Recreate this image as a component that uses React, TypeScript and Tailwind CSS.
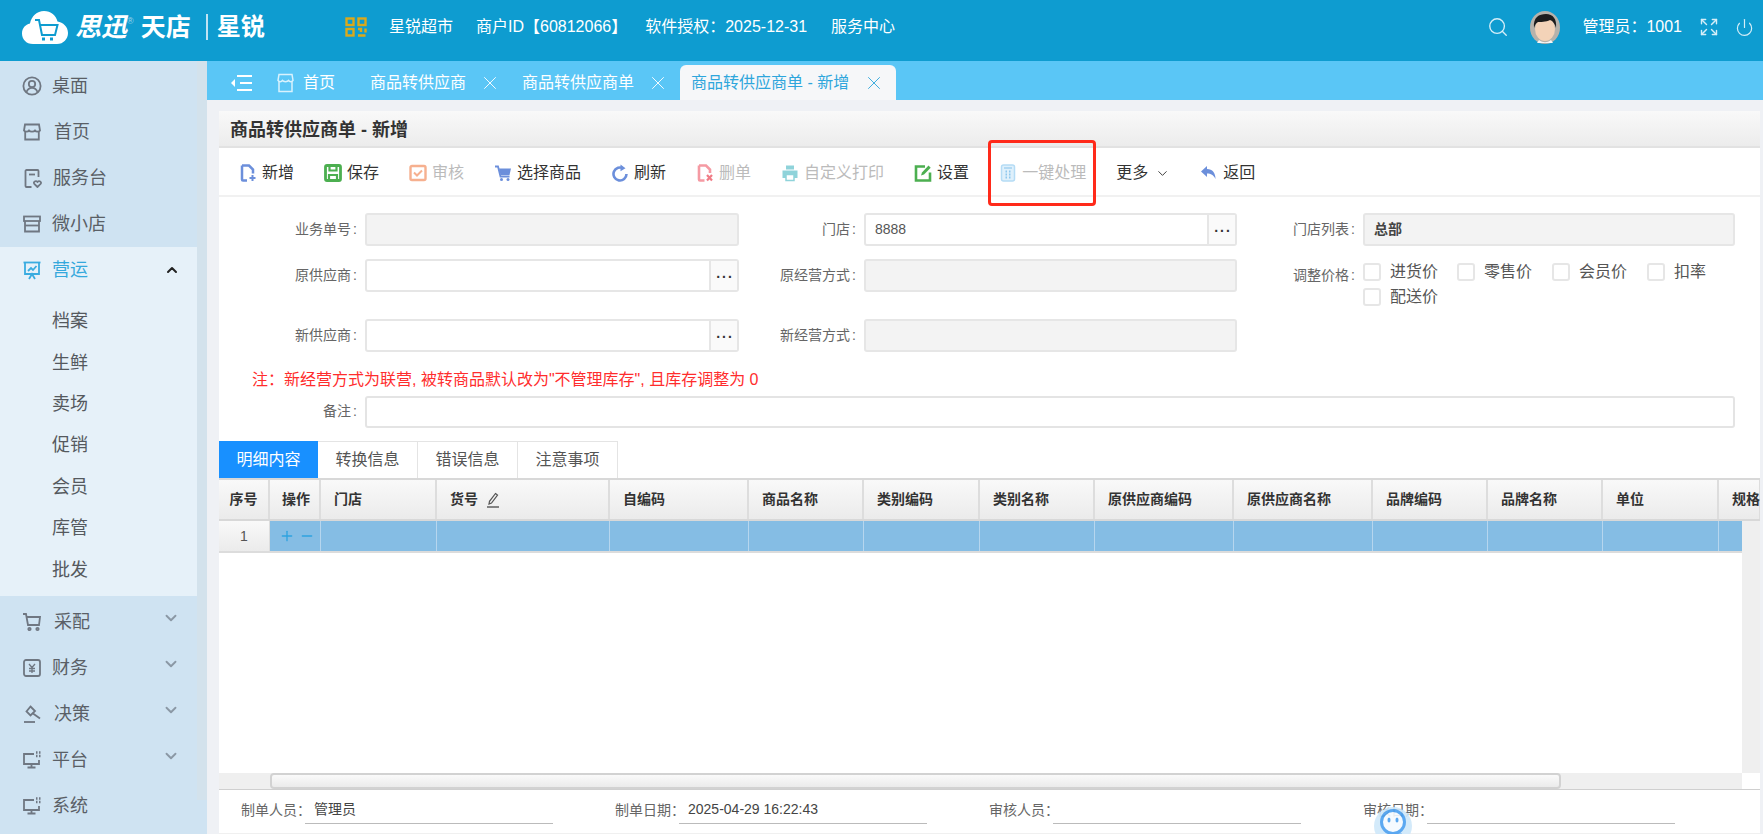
import { ChevronDown, ChevronUp, Search, Expand, Power, X, Plus, Minus } from "lucide-react";
import type { ReactNode } from "react";

const gridCols =
  "grid grid-cols-[51px_51px_116px_173px_139px_115px_116px_115px_139px_139px_115px_115px_116px_42px]";

const tableColumns = [
  "序号", "操作", "门店", "货号", "自编码", "商品名称", "类别编码", "类别名称",
  "原供应商编码", "原供应商名称", "品牌编码", "品牌名称", "单位", "规格",
];

function SideIcon({ children, color = "#6f7782" }: { children: ReactNode; color?: string }) {
  return (
    <svg viewBox="0 0 20 20" className="h-[20px] w-[20px] shrink-0" fill="none" stroke={color} strokeWidth="1.8">
      {children}
    </svg>
  );
}

const sideIcons: Record<string, ReactNode> = {
  桌面: (
    <SideIcon>
      <circle cx="10" cy="10" r="8.6" />
      <circle cx="10" cy="8" r="3.2" />
      <path d="M4.5 16c1-3 3-4.2 5.5-4.2s4.500 1.200 5.500 4.200" />
    </SideIcon>
  ),
  首页: (
    <SideIcon>
      <path d="M3 2.500h14l1 6c-1.500 1.500-4 1.500-5 0-1 1.500-5 1.500-6 0-1 1.500-3.500 1.500-5 0z" />
      <path d="M3.200 9v8.500h13.600V9" />
    </SideIcon>
  ),
  服务台: (
    <SideIcon>
      <path d="M16.500 9V3a1 1 0 0 0-1-1h-11a1 1 0 0 0-1 1v15a1 1 0 0 0 1 1h5" />
      <path d="M7 6.500h6" />
      <path d="M15.500 19l-3.200-3.200c-1.500-2 1.500-3.600 3.200-1.800 1.700-1.800 4.500-.2 3.200 1.800z" />
    </SideIcon>
  ),
  微小店: (
    <SideIcon>
      <rect x="2" y="2.500" width="16" height="4.500" />
      <path d="M3 7v10.500h14V7" />
      <path d="M3 11.500h14" />
    </SideIcon>
  ),
  营运: (
    <SideIcon color="#39ace0">
      <path d="M1.500 2.500h17" />
      <path d="M3 2.500v11.500h14V2.500" />
      <path d="M6 11l3-3 2 2 3.500-4" />
      <path d="M7 19l3-5 3 5" />
    </SideIcon>
  ),
  采配: (
    <SideIcon>
      <path d="M1 2h3l2 11h11l1-8H5" />
      <circle cx="7.500" cy="17" r="1.200" />
      <circle cx="15.500" cy="17" r="1.200" />
    </SideIcon>
  ),
  财务: (
    <SideIcon>
      <rect x="2" y="2" width="16" height="16" rx="2" />
      <path d="M7 6l3 3.500L13 6M7 10.500h6M7 13h6M10 9.500V15" strokeWidth="1.300" />
    </SideIcon>
  ),
  决策: (
    <SideIcon>
      <path d="M8.500 2.500L13 7l-4.500 4.500L4.500 7.500z" />
      <path d="M11 9.500l7 5" />
      <path d="M2 18h11" />
    </SideIcon>
  ),
  平台: (
    <SideIcon>
      <path d="M12 4H2v10h15v-4" />
      <path d="M9.500 14v3M5.500 17.500h8" />
      <path d="M14 2.500h1.500M17 2.500h1.500M14 6h1.500M17 6h1.500" strokeWidth="2.400" />
    </SideIcon>
  ),
  系统: (
    <SideIcon>
      <path d="M12 4H2v10h15v-4" />
      <path d="M9.500 14v3M5.500 17.500h8" />
      <path d="M14 2.500h1.500M17 2.500h1.500M14 6h1.500M17 6h1.500" strokeWidth="2.400" />
    </SideIcon>
  ),
};

const sideTextGap: Record<string, string> = {
  首页: "ml-[12px]",
  服务台: "ml-[11px]",
  采配: "ml-[12px]",
  决策: "ml-[12px]",
};

function SideItem({ name, arrow, active }: { name: string; arrow?: "up" | "down"; active?: boolean }) {
  return (
    <div className="flex h-[46px] items-center pl-[22px] text-[18px]">
      {sideIcons[name]}
      <span className={`${sideTextGap[name] ?? "ml-[10px]"} ${active ? "text-[#35a8dc]" : "text-[#5a5f66]"}`}>{name}</span>
      {arrow === "up" && <ChevronUp className="ml-auto mr-[17px] h-[16px] w-[16px] text-[#222]" strokeWidth={3} />}
      {arrow === "down" && <ChevronDown className="ml-auto mr-[17px] mb-[8px] h-[18px] w-[18px] text-[#8b98a5]" strokeWidth={2.500} />}
    </div>
  );
}

function Sidebar() {
  return (
    <div className="flex w-[207px] shrink-0 bg-[#cfe3f2]">
      <div className="w-[197px] pt-[2px]">
        <SideItem name="桌面" />
        <SideItem name="首页" />
        <SideItem name="服务台" />
        <SideItem name="微小店" />
        <div className="h-[349px] bg-[#e6f1f9]">
          <SideItem name="营运" arrow="up" active />
          <div className="pt-[8px] pl-[52px] text-[18px] text-[#55595e]">
            {["档案", "生鲜", "卖场", "促销", "会员", "库管", "批发"].map((s) => (
              <div key={s} className="flex h-[41.400px] items-center">{s}</div>
            ))}
          </div>
        </div>
        <div className="pt-[3px]">
          <SideItem name="采配" arrow="down" />
          <SideItem name="财务" arrow="down" />
          <SideItem name="决策" arrow="down" />
          <SideItem name="平台" arrow="down" />
          <SideItem name="系统" />
        </div>
      </div>
      <div className="h-[739px] w-[10px] bg-[#d3e2ec]" />
    </div>
  );
}

function ToolIcon({ children }: { children: ReactNode }) {
  return <svg viewBox="0 0 18 18" className="h-[18px] w-[18px] shrink-0">{children}</svg>;
}

const toolIcons: Record<string, ReactNode> = {
  新增: (
    <ToolIcon>
      <path d="M3 1.500h7l4 4v4M8 16.500H4a1 1 0 0 1-1-1v-14" fill="none" stroke="#6c8fdb" strokeWidth="2.500" />
      <path d="M13.500 11v6M10.500 14h6" stroke="#6c8fdb" strokeWidth="2" />
    </ToolIcon>
  ),
  保存: (
    <ToolIcon>
      <rect x="1.500" y="1.500" width="15" height="15" rx="1.500" fill="none" stroke="#4caf50" strokeWidth="2.800" />
      <path d="M5.500 2v4.500h7V2M5 11h8v5H5z" fill="none" stroke="#4caf50" strokeWidth="2.200" />
    </ToolIcon>
  ),
  审核: (
    <ToolIcon>
      <rect x="1.500" y="2" width="15" height="14" rx="1.500" fill="none" stroke="#f6b08f" strokeWidth="2.400" />
      <path d="M5 8.500l3 3 5-5" fill="none" stroke="#f6b08f" strokeWidth="2" />
    </ToolIcon>
  ),
  选择商品: (
    <ToolIcon>
      <path d="M1 2.500h3l2.500 10h9" fill="none" stroke="#6c8fdb" strokeWidth="1.800" />
      <path d="M5 4.500h12l-1.500 6.500H6.500z" fill="#6c8fdb" />
      <circle cx="7.500" cy="15.500" r="1.500" fill="#6c8fdb" />
      <circle cx="14" cy="15.500" r="1.500" fill="#6c8fdb" />
    </ToolIcon>
  ),
  刷新: (
    <ToolIcon>
      <path d="M12.500 4.500A6.500 6.500 0 1 0 15.500 10" fill="none" stroke="#6c8fdb" strokeWidth="2.600" />
      <path d="M9.500 0.500l5 3.800-5 3z" fill="#6c8fdb" />
    </ToolIcon>
  ),
  删单: (
    <ToolIcon>
      <path d="M3 1.500h7l4 4v3.500M8.500 16.500H4a1 1 0 0 1-1-1v-14" fill="none" stroke="#f59aa3" strokeWidth="2.600" />
      <path d="M11 11l5 5.500M16 11l-5 5.500" stroke="#f07c86" strokeWidth="2.200" />
    </ToolIcon>
  ),
  自定义打印: (
    <ToolIcon>
      <path d="M5 1.500h8v4H5z" fill="#8fd3da" />
      <path d="M1.500 6.500h15v7.500H1.500z" fill="#8fd3da" />
      <path d="M5 10.500h8v6H5z" fill="#fff" stroke="#8fd3da" strokeWidth="1.500" />
    </ToolIcon>
  ),
  设置: (
    <ToolIcon>
      <path d="M11 2.500H2v14h14v-8" fill="none" stroke="#4caf50" strokeWidth="2.600" />
      <path d="M7 11.500l1-3L14.500 1.500l2.200 2.200L10 10.500z" fill="#4caf50" />
    </ToolIcon>
  ),
  一键处理: (
    <ToolIcon>
      <rect x="2.500" y="1" width="13" height="16" rx="2" fill="#dff0fb" stroke="#b5dcf5" strokeWidth="1.500" />
      <path d="M5 4h8" stroke="#a3d2f1" strokeWidth="1.500" />
      <path d="M6.500 7.500h1.500M10 7.500h1.500M6.500 10.500h1.500M10 10.500h1.500M6.500 13.500h1.500M10 13.500h1.500" stroke="#8fc7ee" strokeWidth="2" />
    </ToolIcon>
  ),
  返回: (
    <ToolIcon>
      <path d="M7 2L1 7.500 7 13V9.500c4 0 6.500 1.500 8.500 5.500 0-6-3-10-8.500-10z" fill="#6c8fdb" />
    </ToolIcon>
  ),
};

function ToolButton({ label, disabled, children }: { label: string; disabled?: boolean; children?: ReactNode }) {
  return (
    <div className={`relative flex h-[24px] items-center gap-[5px] text-[16px] ${disabled ? "text-[#bbbbbb]" : "text-[#333333]"}`}>
      {toolIcons[label]}
      <span className="whitespace-nowrap">{label}</span>
      {children}
    </div>
  );
}

function Toolbar() {
  return (
    <div className="flex h-[49px] shrink-0 items-center gap-[30px] border-b-2 border-[#f1f1f1] pt-[3px] pl-[20px]">
      <ToolButton label="新增" />
      <ToolButton label="保存" />
      <ToolButton label="审核" disabled />
      <ToolButton label="选择商品" />
      <ToolButton label="刷新" />
      <ToolButton label="删单" disabled />
      <ToolButton label="自定义打印" disabled />
      <ToolButton label="设置" />
      <ToolButton label="一键处理" disabled>
        <div className="absolute top-[-21px] right-[-10px] bottom-[-21px] left-[-11px] z-10 rounded-[4px] border-[3px] border-[#ff2a1a]" />
      </ToolButton>
      <div className="flex h-[24px] items-center gap-[7px] text-[16px] text-[#333333]">
        <span>更多</span>
        <ChevronDown className="h-[15px] w-[15px] text-[#333]" strokeWidth={1.500} />
      </div>
      <ToolButton label="返回" />
    </div>
  );
}

function Label({ text, className = "" }: { text: string; className?: string }) {
  return (
    <div className={`flex h-[33px] items-center justify-end pr-[8px] text-[14px] text-[#666666] ${className}`}>
      {text}<span className="ml-[2px]">:</span>
    </div>
  );
}

function Field({ value, disabled, picker, boldValue }: { value?: string; disabled?: boolean; picker?: boolean; boldValue?: boolean }) {
  return (
    <div className={`flex h-[33px] overflow-hidden rounded-[3px] border-2 border-[#e6e6e6] ${disabled ? "bg-[#f3f3f3]" : "bg-white"}`}>
      <div className={`flex-1 pl-[9px] text-[14px] leading-[29px] ${boldValue ? "font-semibold text-[#444]" : "text-[#555]"}`}>{value}</div>
      {picker && (
        <div className="flex w-[28px] items-center justify-center border-l-2 border-[#e6e6e6] bg-[#fafafa] text-[14px] leading-none font-bold tracking-[2px] text-[#333]">
          <span className="mt-[-6px] ml-[2px]">...</span>
        </div>
      )}
    </div>
  );
}

function PriceCheck({ label, width }: { label: string; width: string }) {
  return (
    <div className={`flex h-[25px] items-center ${width}`}>
      <span className="h-[18px] w-[18px] shrink-0 rounded-[3px] border-2 border-[#e6e6e6] bg-white" />
      <span className="ml-[9px] text-[16px] text-[#555]">{label}</span>
    </div>
  );
}

function FormArea() {
  return (
    <div className="h-[244px] shrink-0 pt-[16px]">
      <div className="grid grid-cols-[146px_374px_125px_373px_126px_372px] grid-rows-[46px_60px_33px] items-start">
        <Label text="业务单号" />
        <Field disabled />
        <Label text="门店" />
        <Field value="8888" picker />
        <Label text="门店列表" />
        <Field disabled value="总部" boldValue />

        <Label text="原供应商" />
        <Field picker />
        <Label text="原经营方式" />
        <Field disabled />
        <Label text="调整价格" />
        <div className="flex flex-wrap">
          <PriceCheck label="进货价" width="w-[94px]" />
          <PriceCheck label="零售价" width="w-[95px]" />
          <PriceCheck label="会员价" width="w-[95px]" />
          <PriceCheck label="扣率" width="w-[88px]" />
          <PriceCheck label="配送价" width="w-[94px]" />
        </div>

        <Label text="新供应商" />
        <Field picker />
        <Label text="新经营方式" />
        <Field disabled />
      </div>
      <div className="mt-[16px] ml-[33px] h-[24px] text-[16px] leading-[24px] text-[#ff2d2d]">
        注：新经营方式为联营, 被转商品默认改为"不管理库存", 且库存调整为 0
      </div>
      <div className="flex">
        <Label text="备注" className="mt-[3px] w-[146px]" />
        <div className="mt-[4px] h-[32px] w-[1370px] rounded-[3px] border-2 border-[#e4e4e4] bg-white" />
      </div>
    </div>
  );
}

function DetailTabs() {
  return (
    <div className="flex h-[37px] shrink-0 text-[16px]">
      <div className="flex w-[99px] items-center justify-center bg-[#1890ff] text-white">明细内容</div>
      {["转换信息", "错误信息", "注意事项"].map((t) => (
        <div key={t} className="flex w-[100px] items-center justify-center border-t border-r border-[#e4e4e4] text-[#555]">{t}</div>
      ))}
    </div>
  );
}

function PenIcon() {
  return (
    <svg viewBox="0 0 14 16" className="ml-[8px] h-[16px] w-[14px]" fill="none" stroke="#555" strokeWidth="1.200">
      <path d="M9.500 1.500l2 1.500-6 8-2.500 1 .5-2.700z" />
      <path d="M1 15h12" strokeWidth="1.400" />
    </svg>
  );
}

function DetailTable() {
  return (
    <div className="flex min-h-0 flex-1 flex-col">
      <div className={`${gridCols} h-[43px] shrink-0 overflow-hidden border-t-2 border-b-2 border-[#d8d8d8] bg-gradient-to-b from-[#f9f9f9] to-[#ebebeb] text-[14px] font-bold text-[#333]`}>
        {tableColumns.map((c, i) => (
          <div
            key={c}
            className={`flex items-center whitespace-nowrap border-r-2 border-[#dddddd] ${i === 0 ? "justify-center" : i === 1 ? "justify-center pl-[3px]" : "pl-[13px]"}`}
          >
            {c}
            {c === "货号" && <PenIcon />}
          </div>
        ))}
      </div>
      <div className="flex min-h-0 flex-1">
        <div className="min-w-0 flex-1 overflow-hidden">
          <div className={`${gridCols} h-[32px] border-b-2 border-[#dcdcdc]`}>
            <div className="flex items-center justify-center border-r border-[#dddddd] bg-gradient-to-b from-[#f9f9f9] to-[#ebebeb] text-[14px] text-[#555]">1</div>
            <div className="flex items-center justify-center gap-[4px] border-r border-[#b6d6ee] bg-[#85bde4] pl-[3px] text-[#2ea3e0]">
              <Plus className="h-[16px] w-[16px]" strokeWidth={2} />
              <Minus className="h-[16px] w-[16px]" strokeWidth={2} />
            </div>
            {tableColumns.slice(2).map((c) => (
              <div key={c} className="border-r border-[#b6d6ee] bg-[#85bde4]" />
            ))}
          </div>
        </div>
        <div className="w-[18px] shrink-0 bg-[#efefef]" />
      </div>
      <div className="flex h-[17px] shrink-0 border-b border-[#cfcfcf]">
        <div className="flex-1 bg-[#efefef] pl-[51px]">
          <div className="h-full w-[1291px] rounded-[4px] border-2 border-[#d2d2d2] bg-gradient-to-b from-[#fafafa] to-[#ebebeb]" />
        </div>
        <div className="w-[18px] bg-white" />
      </div>
    </div>
  );
}

function FooterField({ label, value, className = "" }: { label: string; value?: string; className?: string }) {
  return (
    <div className={`flex ${className}`}>
      <div className="flex h-[28px] w-[64px] items-center whitespace-nowrap text-[14px] text-[#666]">{label}：</div>
      <div className="flex h-[28px] w-[248px] items-center border-b border-[#bbbbbb] pl-[9px] text-[14px] text-[#444]">{value}</div>
    </div>
  );
}

function Footer() {
  return (
    <div className="relative flex h-[44px] shrink-0 border-b border-[#f0f0f0] pt-[6px] pl-[22px]">
      <FooterField label="制单人员" value="管理员" />
      <FooterField label="制单日期" value="2025-04-29 16:22:43" className="ml-[62px]" />
      <FooterField label="审核人员" className="ml-[62px]" />
      <FooterField label="审核日期" className="ml-[62px]" />
    </div>
  );
}

function Logo() {
  return (
    <div className="ml-[22px] flex w-[323px] items-center text-white">
      <svg viewBox="0 0 46 33" className="h-[33px] w-[46px]">
        <path d="M11 33C4 33 0 28 0 22.500 0 17 3.500 13.500 8 12.500 9.500 5 15 0 22 0c7 0 12 4.500 13.500 10.500C41 11.500 46 15.500 46 22c0 6-4.500 11-11 11z" fill="#fff" />
        <path d="M13 9h4l3 15h13l2.500-10H18" fill="none" stroke="#0e9cd0" strokeWidth="2" />
        <path d="M20 28h3M28 28h3" stroke="#0e9cd0" strokeWidth="3" />
      </svg>
      <span className="ml-[7px] text-[26px] leading-none font-bold italic">思迅</span>
      <span className="mb-[10px] text-[9px] text-[#9fd6ec]">®</span>
      <span className="ml-[7px] text-[25px] leading-none font-bold">天店</span>
      <span className="mr-[9px] ml-[15px] h-[26px] w-[2px] bg-[#bfe3f3]" />
      <span className="text-[24px] leading-none font-bold">星锐</span>
    </div>
  );
}

function QrIcon() {
  return (
    <svg viewBox="0 0 22 20" className="h-[20px] w-[22px]" fill="none" stroke="#dba91a" strokeWidth="2.400">
      <rect x="1.500" y="1.500" width="7" height="6.500" />
      <rect x="13.500" y="1.500" width="7" height="6.500" />
      <rect x="1.500" y="12" width="7" height="6.500" />
      <path d="M13 12h3v3M20.500 11.500v4M13 18.500h7.500" />
    </svg>
  );
}

function Avatar() {
  return (
    <svg viewBox="0 0 30 33" className="h-[33px] w-[30px]">
      <ellipse cx="15" cy="16.500" rx="15" ry="16.500" fill="#b6b2ab" />
      <ellipse cx="15" cy="18" rx="10" ry="12" fill="#f3d3b8" />
      <path d="M4 17C3 6 9 3 16 3c7 0 11 5 10 14-1-4-3-7-6-8-4 2-10 2-12 2-2 1-3 3-4 6z" fill="#1d1d1d" />
      <path d="M9 29c4 3 8 3 12 0l2 3H7z" fill="#f5f5f5" />
    </svg>
  );
}

function Header() {
  return (
    <div className="flex h-[61px] shrink-0 items-center bg-[#0e9cd0] pb-[7px] text-[16px] text-white">
      <Logo />
      <QrIcon />
      <span className="ml-[22px]">星锐超市</span>
      <span className="ml-[23px]">商户ID【60812066】</span>
      <span className="ml-[18px]">软件授权：2025-12-31</span>
      <span className="ml-[24px]">服务中心</span>
      <Search className="ml-auto h-[22px] w-[22px] text-[#d5eef8]" strokeWidth={1.500} />
      <div className="ml-[21px]"><Avatar /></div>
      <span className="ml-[22px]">管理员：1001</span>
      <Expand className="ml-[17px] h-[20px] w-[20px] text-[#d5eef8]" strokeWidth={1.700} />
      <Power className="ml-[16px] mr-[9px] h-[19px] w-[19px] text-[#d5eef8]" strokeWidth={1.500} />
    </div>
  );
}

function TabBar() {
  return (
    <div className="flex h-[39px] shrink-0 items-end bg-[#5ac6f6] pl-[23px] text-[16px] text-white">
      <div className="flex h-[35px] items-center">
        <svg viewBox="0 0 22 18" className="h-[18px] w-[22px]" fill="none" stroke="#fff" strokeWidth="2.200">
          <path d="M7 2h15M10 9h12M7 16h15" />
          <path d="M5 5L1 9l4 4z" fill="#fff" strokeWidth="0" />
        </svg>
        <svg viewBox="0 0 17 20" className="ml-[25px] h-[20px] w-[17px]" fill="none" stroke="#d9f2fd" strokeWidth="1.500">
          <path d="M2 1.500h13l1 6c-1.500 1.500-3.500 1.500-4.500 0-1 1.500-5 1.500-6 0-1 1.500-3 1.500-4.500 0z" />
          <path d="M2 8v10.500h13V8" />
        </svg>
        <span className="ml-[9px]">首页</span>
        <span className="ml-[35px]">商品转供应商</span>
        <X className="ml-[13px] h-[22px] w-[22px]" strokeWidth={1} />
        <span className="ml-[21px]">商品转供应商单</span>
        <X className="ml-[13px] h-[22px] w-[22px]" strokeWidth={1} />
      </div>
      <div className="ml-[11px] flex h-[35px] w-[216px] items-center rounded-t-[6px] bg-[#f6f7f9] pl-[11px] text-[#2ea6dc]">
        <span className="whitespace-nowrap">商品转供应商单 - 新增</span>
        <X className="ml-[14px] h-[22px] w-[22px]" strokeWidth={1} />
      </div>
    </div>
  );
}

function BotBubble() {
  return (
    <div className="absolute top-[807px] left-[1374px] h-[27px] w-[38px] overflow-hidden opacity-90">
      <svg viewBox="0 0 38 38" className="h-[38px] w-[38px]">
        <circle cx="19" cy="19" r="19" fill="#cfe8fa" />
        <path d="M19 26.500h9l-3 3z" fill="#4a9ff0" />
        <circle cx="19" cy="15" r="11.500" fill="#f4faff" stroke="#4a9ff0" strokeWidth="3" />
        <ellipse cx="15" cy="13" rx="1.500" ry="2.500" fill="#4a9ff0" />
        <ellipse cx="23" cy="13" rx="1.500" ry="2.500" fill="#4a9ff0" />
      </svg>
    </div>
  );
}

export default function App() {
  return (
    <div className="relative flex h-[834px] w-[1763px] flex-col overflow-hidden [font-family:'Liberation_Sans','Noto_Sans_CJK_SC',sans-serif]">
      <Header />
      <div className="flex min-h-0 flex-1">
        <Sidebar />
        <div className="flex min-w-0 flex-1 flex-col bg-[#eff1f5]">
          <TabBar />
          <div className="mt-[11px] mr-[3px] ml-[12px] flex min-h-0 flex-1 flex-col bg-white">
            <div className="flex h-[37px] shrink-0 items-center border-b-2 border-[#e2e2e2] bg-gradient-to-b from-[#f9f9f9] to-[#ececec] pt-[4px] pl-[11px] text-[18px] font-bold text-[#333]">
              商品转供应商单 - 新增
            </div>
            <Toolbar />
            <FormArea />
            <DetailTabs />
            <DetailTable />
            <Footer />
          </div>
        </div>
      </div>
      <BotBubble />
    </div>
  );
}
